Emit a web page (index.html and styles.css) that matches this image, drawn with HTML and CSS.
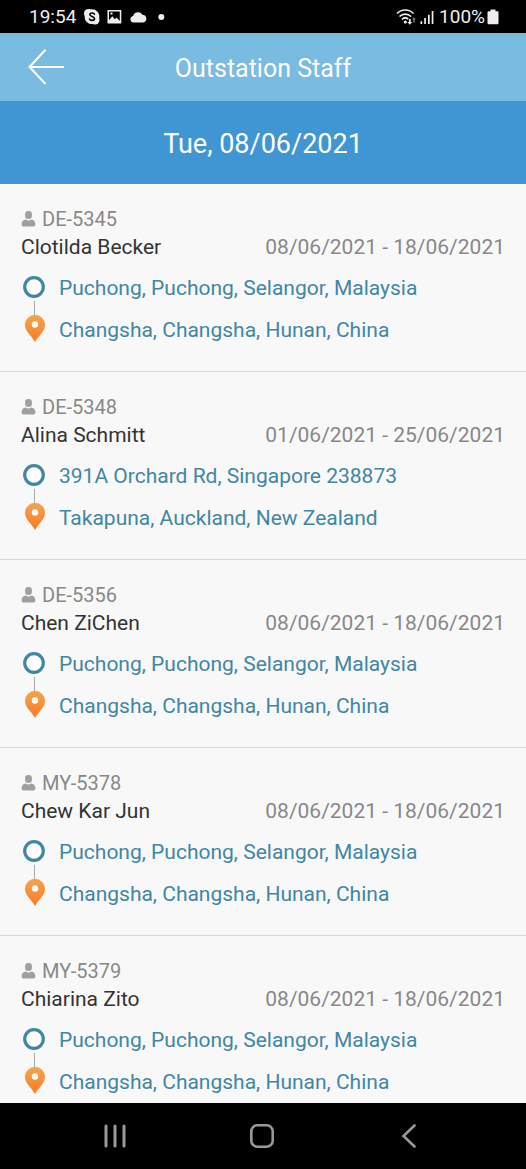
FILE: index.html
```html
<!DOCTYPE html>
<html lang="en">
<head>
<meta charset="utf-8">
<meta name="viewport" content="width=device-width, initial-scale=1">
<title>Outstation Staff</title>
<link rel="stylesheet" href="styles.css">
</head>
<body>
<svg class="defs" aria-hidden="true">
  <defs>
    <linearGradient id="pin-fill" x1="0" y1="0" x2="0" y2="1">
      <stop offset="0" stop-color="#f5a54c"/>
      <stop offset="1" stop-color="#fb7a26"/>
    </linearGradient>
    <symbol id="person" viewBox="0 0 14 16">
      <rect x="3.600" y="0" width="6.800" height="8" rx="3.200"/>
      <path d="M4.200 8.400Q7 10.400 9.800 8.400C12.500 9 13.900 10.500 13.900 13c0 1.700-.6 2.500-1.700 2.500H1.800C.7 15.500.1 14.700.1 13c0-2.500 1.400-4 4.100-4.600z"/>
    </symbol>
    <symbol id="route" viewBox="0 0 28 84">
      <circle cx="13" cy="20" r="9.300" fill="#fff" stroke="#3f87a3" stroke-width="3.200"/>
      <path d="M13.500 34v15" stroke="#aaa" stroke-width="1"/>
      <path d="M14 75C10.500 68.500 4 64.500 4 57.700a10 10 0 0 1 20 0C24 64.500 17.500 68.500 14 75z" fill="url(#pin-fill)"/>
      <circle cx="14" cy="57.500" r="3.200" fill="#fff"/>
    </symbol>
  </defs>
</svg>

<div class="status">
  <time class="clock">19:54</time>
  <svg class="notices" viewBox="0 0 84 18" aria-hidden="true">
    <g fill="#eee">
      <circle cx="4.500" cy="5.500" r="4.500"/><circle cx="11" cy="12" r="4.500"/><circle cx="8" cy="8.700" r="7.400"/>
      <path fill-rule="evenodd" d="M23.500 2h13.800v13.600H23.500zM25 3.500v8.700l3.300-4 2.500 3 1.700-1.800 3.300 3.500V3.500z"/>
      <rect x="26.500" y="4.500" width="2" height="2"/>
      <path d="M49.500 14.600a3.400 3.400 0 0 1-.4-6.700 5.200 5.200 0 0 1 9.300-1.200 4 4 0 0 1 .8 7.900z"/>
      <circle cx="77.300" cy="9" r="3"/>
    </g>
    <path d="M10.400 6.200C9.500 4.500 5.800 4.700 5.900 6.800c.1 2 4.500 1.500 4.600 3.700.1 2.300-4.200 2.500-5 .5" fill="none" stroke="#000" stroke-width="1.600" stroke-linecap="round"/>
  </svg>
  <svg class="signal" viewBox="0 0 40 18" aria-hidden="true">
    <g fill="none" stroke="#eee" stroke-width="1.700">
      <path d="M1 5.500c4.500-4.700 12-4.700 16.500 0M3.500 8.500c3.200-3.300 8.300-3.300 11.500 0M6 11.300c1.900-1.800 4.500-1.800 6.200-.2"/>
    </g>
    <g fill="#eee">
      <circle cx="9.300" cy="14" r="1.600"/>
      <path d="M12.900 11h1.800v3h1.500l-2.400 2.800-2.400-2.800h1.500z"/>
      <path fill="#777" d="M17.300 14.500h1.500v-3h1l-1.800-2.600-1.800 2.600h1.100z"/>
      <path d="M24.500 13.200h1.700V16h-1.700zM28.200 10h1.700v6h-1.700zM32 6.800h1.700V16H32zM35.700 3h1.700v13h-1.700z"/>
    </g>
  </svg>
  <span class="charge">100%</span>
  <svg class="battery" viewBox="0 0 12 18" aria-hidden="true"><path fill="#eee" d="M3.500 1.500h5v1.800h1.800q1.200 0 1.200 1.200v10.600q0 1.200-1.200 1.200H1.700Q.5 16.300.5 15.100V4.500q0-1.200 1.200-1.200h1.800z"/></svg>
</div>

<header class="bar">
  <button class="back" type="button" aria-label="Back">
    <svg viewBox="0 0 36 36" aria-hidden="true"><path d="M17.500.8 1.500 18l16 17M1.500 18H36" fill="none" stroke="#fff" stroke-width="2"/></svg>
  </button>
  <h1 class="title">Outstation Staff</h1>
</header>
<div class="date">Tue, 08/06/2021</div>

<main class="list">
  <article class="trip">
    <div class="code"><svg class="person"><use href="#person"/></svg>DE-5345</div>
    <div class="who"><h2 class="name">Clotilda Becker</h2><span class="period">08/06/2021 - 18/06/2021</span></div>
    <div class="journey"><svg class="route"><use href="#route"/></svg><div class="places"><div>Puchong, Puchong, Selangor, Malaysia</div><div>Changsha, Changsha, Hunan, China</div></div></div>
  </article>
  <article class="trip">
    <div class="code"><svg class="person"><use href="#person"/></svg>DE-5348</div>
    <div class="who"><h2 class="name">Alina Schmitt</h2><span class="period">01/06/2021 - 25/06/2021</span></div>
    <div class="journey"><svg class="route"><use href="#route"/></svg><div class="places"><div>391A Orchard Rd, Singapore 238873</div><div>Takapuna, Auckland, New Zealand</div></div></div>
  </article>
  <article class="trip">
    <div class="code"><svg class="person"><use href="#person"/></svg>DE-5356</div>
    <div class="who"><h2 class="name">Chen ZiChen</h2><span class="period">08/06/2021 - 18/06/2021</span></div>
    <div class="journey"><svg class="route"><use href="#route"/></svg><div class="places"><div>Puchong, Puchong, Selangor, Malaysia</div><div>Changsha, Changsha, Hunan, China</div></div></div>
  </article>
  <article class="trip">
    <div class="code"><svg class="person"><use href="#person"/></svg>MY-5378</div>
    <div class="who"><h2 class="name">Chew Kar Jun</h2><span class="period">08/06/2021 - 18/06/2021</span></div>
    <div class="journey"><svg class="route"><use href="#route"/></svg><div class="places"><div>Puchong, Puchong, Selangor, Malaysia</div><div>Changsha, Changsha, Hunan, China</div></div></div>
  </article>
  <article class="trip">
    <div class="code"><svg class="person"><use href="#person"/></svg>MY-5379</div>
    <div class="who"><h2 class="name">Chiarina Zito</h2><span class="period">08/06/2021 - 18/06/2021</span></div>
    <div class="journey"><svg class="route"><use href="#route"/></svg><div class="places"><div>Puchong, Puchong, Selangor, Malaysia</div><div>Changsha, Changsha, Hunan, China</div></div></div>
  </article>
</main>

<nav class="keys">
  <button type="button" aria-label="Recent apps"><svg viewBox="0 0 26 26"><path d="M4 3v20M13 3v20M22 3v20" stroke-width="3"/></svg></button>
  <button type="button" aria-label="Home"><svg viewBox="0 0 26 26"><rect x="2.300" y="2.300" width="21.400" height="21.400" rx="6" stroke-width="2.600"/></svg></button>
  <button type="button" aria-label="Back"><svg viewBox="0 0 26 26"><path d="M18.500 2.500 7.500 13l11 10.500" stroke-width="2.600"/></svg></button>
</nav>
</body>
</html>
```
FILE: styles.css
```css
* { box-sizing: border-box; }

body {
  margin: 0;
  height: 100vh;
  display: flex;
  flex-direction: column;
  background: #f8f8f8;
  font-family: Roboto, "Liberation Sans", sans-serif;
  font-size: 21px;
  line-height: 28px;
  color: #333;
}

h1, h2 { margin: 0; font-size: inherit; font-weight: 400; }
svg { display: block; flex: none; }
button { border: 0; padding: 0; background: none; }
.defs { position: absolute; width: 0; height: 0; }

.status {
  flex: none;
  display: flex;
  align-items: center;
  padding: 0 27px 0 29px;
  height: 33px;
  background: #000;
  color: #eee;
  font-size: 19px;
}
.notices { width: 84px; height: 18px; margin-left: 8px; }
.signal { width: 40px; height: 18px; margin-left: auto; }
.charge { margin: 0 2px 0 3px; }
.battery { width: 12px; height: 18px; }

.bar {
  flex: none;
  display: grid;
  grid-template-columns: 36px 1fr 36px;
  align-items: center;
  padding: 0 28px;
  height: 68px;
  background: #79bbe1;
  color: #fff;
}
.back svg { width: 36px; height: 36px; }
.title { font-size: 25px; line-height: 32px; padding-top: 3px; text-align: center; }

.date {
  flex: none;
  height: 83px;
  line-height: 87px;
  background: #3f96d3;
  color: #fff;
  font-size: 27px;
  text-align: center;
}

.list { flex: 1; min-height: 0; overflow: hidden; }
.trip {
  padding: 21px 21px 20px;
  border-bottom: 1px solid #d8d8d8;
}
.code { display: flex; align-items: center; gap: 6px; font-size: 20px; color: #888; }
.person { width: 15px; height: 16px; fill: #a0a0a0; }
.who { display: flex; justify-content: space-between; }
.period { color: #888; }
.journey { display: flex; gap: 10px; margin-top: 6px; }
.route { width: 28px; height: 84px; }
.places { line-height: 42px; color: #3f87a3; }

.keys {
  flex: none;
  display: grid;
  grid-template-columns: repeat(3, 1fr);
  padding: 0 44px 0 41px;
  height: 66px;
  background: #000;
}
.keys button { display: grid; place-items: center; }
.keys svg { width: 26px; height: 26px; fill: none; stroke: #999; stroke-linecap: round; }
```
